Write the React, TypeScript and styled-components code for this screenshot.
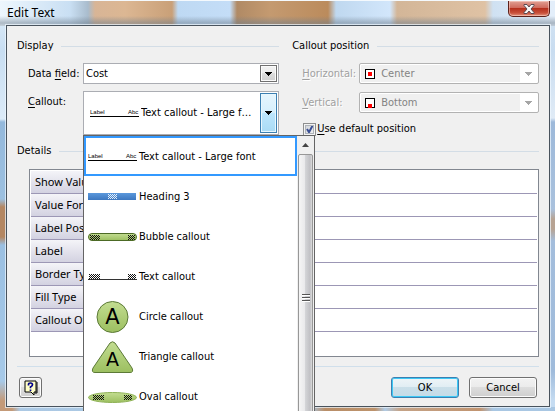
import React, { useState } from 'react';
import styled, { createGlobalStyle, css } from 'styled-components';

const GlobalStyle = createGlobalStyle`
  * { box-sizing: border-box; }
  body {
    margin: 0;
    font-family: 'DejaVu Sans Condensed', 'Noto Sans', sans-serif;
    font-size: 11px;
    line-height: 14px;
    color: #000;
  }
  button, select, input { font: inherit; color: inherit; margin: 0; }
  u { text-underline-offset: 2px; }
`;

const Frame = styled.div`
  min-height: 100vh;
  display: flex;
  flex-direction: column;
  overflow: hidden;
  padding: 0 5px 4px 6px;
  border-top: 1px solid #f4f9fd;
  background:
    linear-gradient(180deg, transparent 15px, rgba(110, 125, 140, 0.5) 22px, rgba(110, 125, 140, 0.3) 25px) top / 100% 25px no-repeat,
    linear-gradient(90deg, #edf6fd 0, #c9dff3 70px, #a9bccd 88px, #d8b596 95px, #dcb793 125px, #c9a078 172px, #bed9f3 178px, #c4ddf7 230px, #b08a65 237px, #c49a70 270px, #bb8b5c 328px, #bfd8ef 336px, #d2e6fb 390px, #d3b698 397px, #dfc2a4 485px, #cfe1f2 493px, #e3eefa 550px) top / 100% 25px no-repeat,
    linear-gradient(90deg, #c49a78 0, #c49a78 12px, #acc9e4 20px, #a7c6e3 310px, #b98e68 325px, #bd936c 375px, #b0cbe5 385px, #c5a387 400px, #c19470 480px, #a9c7e3 493px) bottom / 100% 4px no-repeat,
    linear-gradient(180deg, #d5e5f4 0, #c8dcf0 50px, #e0ebf6 117px, #9db9da 121px, #a9c1dd 208px, #b7a393 218px, #b7a393 228px, #a3bddc 240px, #9fbbdb 370px, #c5dcf2 400px) right / 5px 100% no-repeat,
    linear-gradient(180deg, #e2effa 0, #c8def2 50px, #dcebf8 118px, #94b9dc 121px, #9cc0e0 198px, #b48762 206px, #b48762 236px, #9bc0e2 244px, #a6c9e8 380px, #c49a78 400px);
`;

const TitleBar = styled.header`
  display: flex;
  justify-content: space-between;
  align-items: flex-start;
  height: 24px;
  padding-left: 1px;
`;

const Title = styled.h1`
  margin: 4px 0 0;
  font: 400 12px/16px 'Noto Sans', sans-serif;
`;

const CloseButton = styled.button`
  display: flex;
  align-items: center;
  justify-content: center;
  width: 42px;
  height: 16px;
  padding: 0;
  border: 1px solid #5c211b;
  border-top: 0;
  border-radius: 0 0 5px 5px;
  background: linear-gradient(#e0a094, #cf6a5c 45%, #b5301d 50%, #c9513b 80%, #e49580);
  box-shadow: inset 0 0 0 1px rgba(255, 220, 210, 0.5);
`;

const Client = styled.form`
  flex: 1;
  display: flex;
  flex-direction: column;
  padding: 13px 10px 8px;
  border: 1px solid #49535d;
  background: #f0f0f0;
  box-shadow: 0 0 0 1px rgba(240, 248, 255, 0.7);
`;

const Groups = styled.div`
  display: grid;
  grid-template-columns: minmax(0, 17fr) minmax(0, 16fr);
  gap: 13px;
`;

const Group = styled.section`
  display: flex;
  flex-direction: column;
`;

const GroupTitle = styled.h2`
  display: flex;
  align-items: center;
  gap: 8px;
  margin: 0 0 2px;
  font: inherit;
  &::after {
    content: '';
    flex: 1;
    height: 1px;
    background: #d3dde6;
  }
`;

const Field = styled.div<{ $tall?: boolean; $muted?: boolean }>`
  display: grid;
  grid-template-columns: ${p => (p.$muted ? '57px' : '55px')} minmax(0, 1fr);
  align-items: ${p => (p.$tall ? 'start' : 'center')};
  padding-left: ${p => (p.$muted ? 10 : 11)}px;
  margin-top: ${p => (p.$tall ? 7 : 8)}px;
  > label { padding-top: ${p => (p.$tall ? 4 : 1)}px; }
  ${p => p.$muted && css`
    color: #8c8c8c;
    label { color: #a0a0a0; text-shadow: 1px 1px #fff; }
  `}
`;

const SelectBox = styled.div`
  position: relative;
  height: 21px;
`;

const Select = styled.select<{ $iconed?: boolean }>`
  appearance: none;
  width: 100%;
  height: 21px;
  padding: 0 20px 0 ${p => (p.$iconed ? 21 : 2)}px;
  border: 1px solid #abadb3;
  border-radius: ${p => (p.$iconed ? 2 : 0)}px;
  background: #fff;
  opacity: 1;
  &:disabled {
    color: #838383;
    border-color: #b2b2b2;
    background: linear-gradient(90deg, #f0f0f0, #f0f0f0) 1px 1px / calc(100% - 19px) 17px no-repeat #fff;
  }
`;

const Arrow = styled.span<{ $boxed?: boolean }>`
  position: absolute;
  top: 2px;
  right: 2px;
  width: 17px;
  height: 17px;
  display: flex;
  align-items: center;
  justify-content: center;
  pointer-events: none;
  color: #a6a6a6;
  ${p => p.$boxed && css`
    color: #000;
    border: 1px solid #707070;
    background: linear-gradient(#f2f2f2, #ebebeb 50%, #ddd 50%, #cfcfcf);
    box-shadow: inset 0 0 0 1px #fafafa;
  `}
`;

const Swatch = styled.svg`
  position: absolute;
  left: 6px;
  top: 6px;
  pointer-events: none;
`;

const CalloutBox = styled.div`
  position: relative;
`;

const CalloutButton = styled.button`
  display: flex;
  align-items: center;
  gap: 2px;
  width: 100%;
  height: 44px;
  padding: 0 1px 0 6px;
  border: 1px solid #abadb3;
  background: #fff;
  text-align: left;
  white-space: nowrap;
`;

const CalloutText = styled.span`
  flex: 1;
  overflow: hidden;
  text-overflow: ellipsis;
`;

const HotArrow = styled.span`
  display: flex;
  align-items: center;
  justify-content: center;
  width: 17px;
  height: 40px;
  margin-left: 2px;
  border: 1px solid #3c7fb1;
  background: linear-gradient(#e6f5fd, #d6effc 50%, #bde6fd 50%, #a9dbf5);
  box-shadow: inset 0 0 0 1px #e8f7fe;
`;

const Menu = styled.div`
  position: absolute;
  z-index: 5;
  top: 100%;
  left: 0;
  width: calc(100% + 36px);
  display: flex;
  border: 1px solid #646464;
  background: #fff;
`;

const Options = styled.ul`
  flex: 1;
  margin: 0;
  padding: 0;
  list-style: none;
`;

const Option = styled.li<{ $current: boolean }>`
  display: flex;
  align-items: center;
  gap: 2px;
  height: 40px;
  padding: 2px 0 0 2px;
  border: 2px solid ${p => (p.$current ? '#3399ff' : 'transparent')};
  white-space: nowrap;
`;

const ScrollTrack = styled.div`
  display: flex;
  flex-direction: column;
  width: 17px;
  background: #f0f0f0;
`;

const ScrollUp = styled.button`
  display: flex;
  align-items: center;
  justify-content: center;
  height: 18px;
  padding: 0;
  border: 0;
  background: none;
`;

const Thumb = styled.div`
  display: flex;
  align-items: center;
  justify-content: center;
  height: 286px;
  margin: 0 1px;
  border: 1px solid #979797;
  border-radius: 2px;
  background: linear-gradient(90deg, #f5f5f5, #e9e9eb 45%, #d3d4d7 50%, #c0c0c4 85%, #dcdcdc);
`;

const CheckLabel = styled.label`
  display: flex;
  align-items: center;
  gap: 1px;
  margin: 9px 0 0 11px;
`;

const Check = styled.input`
  appearance: none;
  width: 13px;
  height: 13px;
  border: 1px solid #8e8f8f;
  background: linear-gradient(135deg, #cbcfd5, #f6f6f6);
  box-shadow: inset 0 0 0 1px #f4f4f4, inset 0 0 0 2px #aeb3b9;
  &:checked {
    background: url("data:image/svg+xml,%3Csvg xmlns='http://www.w3.org/2000/svg' width='11' height='11'%3E%3Cpath d='M3 5l2 3.2L8.5 1.8' fill='none' stroke='%233b4f94' stroke-width='2'/%3E%3C/svg%3E"), linear-gradient(135deg, #cbcfd5, #f6f6f6);
  }
`;

const Details = styled.section`
  margin-top: 8px;
  flex: 1;
  display: flex;
  flex-direction: column;
`;

const Sheet = styled.div`
  flex: 1;
  margin: 9px 0 0 12px;
  padding: 1px 1px 24px;
  border: 1px solid #828790;
  background: #fff;
`;

const Table = styled.table`
  width: 100%;
  border-collapse: separate;
  border-spacing: 0;
  th, td {
    height: 23px;
    padding: 0 4px;
    border-bottom: 1px solid #9c97b5;
  }
  th {
    width: 120px;
    background: linear-gradient(#f4f4f8, #d3d2e1);
    font: 400 11px/16px 'Noto Sans', sans-serif;
    text-align: left;
    white-space: nowrap;
  }
`;

const Footer = styled.footer`
  display: flex;
  align-items: center;
  gap: 10px;
  margin-top: 9px;
  padding: 10px 2px 0;
  border-top: 1px solid #d0dfeb;
`;

const PushButton = styled.button<{ $default?: boolean }>`
  width: 68px;
  height: 21px;
  padding: 0;
  border: 1px solid ${p => (p.$default ? '#3c7fb1' : '#707070')};
  border-radius: 3px;
  background: ${p => p.$default
    ? 'linear-gradient(#eef4f7, #e0edf3 50%, #cadfe9 50%, #c4dbe7)'
    : 'linear-gradient(#f2f2f2, #ebebeb 50%, #ddd 50%, #cfcfcf)'};
  box-shadow: inset 0 0 0 1px ${p => (p.$default ? '#3cc8f5' : '#fcfcfc')};
`;

const HelpButton = styled(PushButton)`
  display: flex;
  align-items: center;
  justify-content: center;
  width: 23px;
  margin-right: auto;
`;

const Down = () => (
  <svg width="7" height="4" viewBox="0 0 7 4" shapeRendering="crispEdges" aria-hidden="true">
    <path d="M0 0h7L3.5 4z" fill="currentColor" />
  </svg>
);

type Kind = 'label' | 'heading' | 'bubble' | 'text' | 'circle' | 'triangle' | 'oval';

const Dots = ({ x, y, w, h = 5, fill = '#111' }: { x: number; y: number; w: number; h?: number; fill?: string }) => (
  <g fill={fill} shapeRendering="crispEdges">
    {Array.from({ length: w * h }, (_, i) => {
      const cx = i % w;
      const cy = Math.floor(i / w);
      return (cx + cy) % 2 === 0 ? <rect key={i} x={x + cx} y={y + cy} width="1" height="1" /> : null;
    })}
  </g>
);

const CalloutIcon = ({ kind }: { kind: Kind }) => (
  <svg width="49" height="34" viewBox="0 0 49 34" aria-hidden="true">
    <defs>
      <linearGradient id={`green-${kind}`} x1="0" y1="0" x2="0" y2="1">
        <stop offset="0" stopColor="#c3dd91" />
        <stop offset="1" stopColor="#9cbf60" />
      </linearGradient>
      <linearGradient id={`blue-${kind}`} x1="0" y1="0" x2="0" y2="1">
        <stop offset="0" stopColor="#5b98dc" />
        <stop offset="1" stopColor="#3d78c0" />
      </linearGradient>
    </defs>
    {kind === 'label' && (
      <>
        <text x="0" y="18" fontSize="6" fontFamily="Liberation Sans, sans-serif">Label</text>
        <text x="38" y="18" fontSize="6" fontFamily="Liberation Sans, sans-serif">Abc</text>
        <rect y="20" width="49" height="1" />
      </>
    )}
    {kind === 'heading' && (
      <>
        <rect y="13" width="48" height="7" fill={`url(#blue-${kind})`} />
        <Dots x={20} y={14} w={9} fill="#e4effa" />
      </>
    )}
    {kind === 'bubble' && (
      <>
        <rect x="0.5" y="13.5" width="48" height="7" rx="3.5" fill={`url(#green-${kind})`} stroke="#4c6a25" />
        <Dots x={2} y={15} w={10} />
        <Dots x={40} y={15} w={7} />
      </>
    )}
    {kind === 'text' && (
      <>
        <Dots x={1} y={14} w={11} />
        <Dots x={40} y={14} w={8} />
        <rect y="19" width="49" height="1" fill="#333" />
      </>
    )}
    {kind === 'circle' && (
      <>
        <circle cx="24.5" cy="17" r="15.5" fill={`url(#green-${kind})`} stroke="#5c7a37" />
        <text x="24.5" y="24" fontSize="21" textAnchor="middle" fontFamily="DejaVu Sans, sans-serif">A</text>
      </>
    )}
    {kind === 'triangle' && (
      <>
        <path d="M22 3Q24.5 .5 27 3L44 28Q46 32.5 42 32.5H7Q3 32.5 5 28Z" fill={`url(#green-${kind})`} stroke="#5c7a37" />
        <text x="24.5" y="26" fontSize="19" textAnchor="middle" fontFamily="DejaVu Sans, sans-serif">A</text>
      </>
    )}
    {kind === 'oval' && (
      <>
        <ellipse cx="24.5" cy="17.5" rx="24" ry="5" fill={`url(#green-${kind})`} stroke="#8fb257" />
        <Dots x={5} y={15} w={11} />
        <Dots x={36} y={15} w={8} />
      </>
    )}
  </svg>
);

const callouts: { kind: Kind; name: string }[] = [
  { kind: 'label', name: 'Text callout - Large font' },
  { kind: 'heading', name: 'Heading 3' },
  { kind: 'bubble', name: 'Bubble callout' },
  { kind: 'text', name: 'Text callout' },
  { kind: 'circle', name: 'Circle callout' },
  { kind: 'triangle', name: 'Triangle callout' },
  { kind: 'oval', name: 'Oval callout' },
];

const properties = ['Show Value', 'Value Format', 'Label Position', 'Label', 'Border Type', 'Fill Type', 'Callout Offset'];

const PositionField = ({ id, hot, rest, value, dotY }: { id: string; hot: string; rest: string; value: string; dotY: number }) => (
  <Field $muted>
    <label htmlFor={id}><u>{hot}</u>{rest}</label>
    <SelectBox>
      <Select id={id} disabled $iconed defaultValue={value}><option>{value}</option></Select>
      <Swatch width="10" height="10" aria-hidden="true" shapeRendering="crispEdges">
        <rect x="0.5" y="0.5" width="9" height="9" fill="#fff" stroke="#000" />
        <rect x="3" y={dotY} width="4" height="4" fill="#f00" />
      </Swatch>
      <Arrow><Down /></Arrow>
    </SelectBox>
  </Field>
);

export default function App() {
  const [current, setCurrent] = useState(0);
  const [open, setOpen] = useState(true);

  return (
    <>
      <GlobalStyle />
      <Frame>
        <TitleBar>
          <Title>Edit Text</Title>
          <CloseButton type="button" aria-label="Close">
            <svg width="12" height="10" viewBox="0 0 12 10" aria-hidden="true">
              <path d="M1 .5h3L6 3 8 .5h3v1L8 5l3 3.5v1H8L6 7 4 9.5H1v-1L4 5 1 1.5z" fill="#f6f6f6" stroke="#5a4a52" />
            </svg>
          </CloseButton>
        </TitleBar>
        <Client onSubmit={e => e.preventDefault()}>
          <Groups>
            <Group>
              <GroupTitle>Display</GroupTitle>
              <Field>
                <label htmlFor="data-field">Data <u>f</u>ield:</label>
                <SelectBox>
                  <Select id="data-field" defaultValue="Cost"><option>Cost</option></Select>
                  <Arrow $boxed><Down /></Arrow>
                </SelectBox>
              </Field>
              <Field $tall>
                <label htmlFor="callout"><u>C</u>allout:</label>
                <CalloutBox>
                  <CalloutButton id="callout" type="button" aria-haspopup="listbox" aria-expanded={open} onClick={() => setOpen(!open)}>
                    <CalloutIcon kind={callouts[current].kind} />
                    <CalloutText>{callouts[current].name}</CalloutText>
                    <HotArrow><Down /></HotArrow>
                  </CalloutButton>
                  {open && (
                    <Menu>
                      <Options role="listbox" aria-label="Callout">
                        {callouts.map((c, i) => (
                          <Option key={c.kind} role="option" aria-selected={i === current} $current={i === current} onClick={() => setCurrent(i)}>
                            <CalloutIcon kind={c.kind} />
                            {c.name}
                          </Option>
                        ))}
                      </Options>
                      <ScrollTrack>
                        <ScrollUp type="button" aria-label="Scroll up">
                          <svg width="7" height="4" aria-hidden="true"><path d="M0 4h7L3.5 0z" fill="#444" /></svg>
                        </ScrollUp>
                        <Thumb>
                          <svg width="8" height="9" shapeRendering="crispEdges" aria-hidden="true">
                            <path d="M0 1.5h8M0 4.5h8M0 7.5h8" stroke="#555" />
                            <path d="M0 2.5h8M0 5.5h8M0 8.5h8" stroke="#fff" />
                          </svg>
                        </Thumb>
                      </ScrollTrack>
                    </Menu>
                  )}
                </CalloutBox>
              </Field>
            </Group>
            <Group>
              <GroupTitle>Callout position</GroupTitle>
              <PositionField id="horizontal" hot="H" rest="orizontal:" value="Center" dotY={3} />
              <PositionField id="vertical" hot="V" rest="ertical:" value="Bottom" dotY={6} />
              <CheckLabel>
                <Check type="checkbox" defaultChecked />
                <span><u>U</u>se default position</span>
              </CheckLabel>
            </Group>
          </Groups>
          <Details>
            <GroupTitle>Details</GroupTitle>
            <Sheet>
              <Table>
                <tbody>
                  {properties.map(p => (
                    <tr key={p}><th scope="row">{p}</th><td /></tr>
                  ))}
                </tbody>
              </Table>
            </Sheet>
          </Details>
          <Footer>
            <HelpButton type="button" aria-label="Help">
              <svg width="14" height="16" viewBox="0 0 14 16" aria-hidden="true">
                <path d="M1 1h11v11H10v3L7 12H1z" fill="#ffffc8" stroke="#000" />
                <path d="M13 2v11h-2" fill="none" stroke="#000" />
                <path d="M4.5 5.5V4.5Q4.5 3 6.5 3T8.5 4.8Q8.5 6 6.5 7v1.2M6.5 9.5v1.5" fill="none" stroke="#00008b" strokeWidth="1.7" />
              </svg>
            </HelpButton>
            <PushButton type="submit" $default>OK</PushButton>
            <PushButton type="button">Cancel</PushButton>
          </Footer>
        </Client>
      </Frame>
    </>
  );
}
